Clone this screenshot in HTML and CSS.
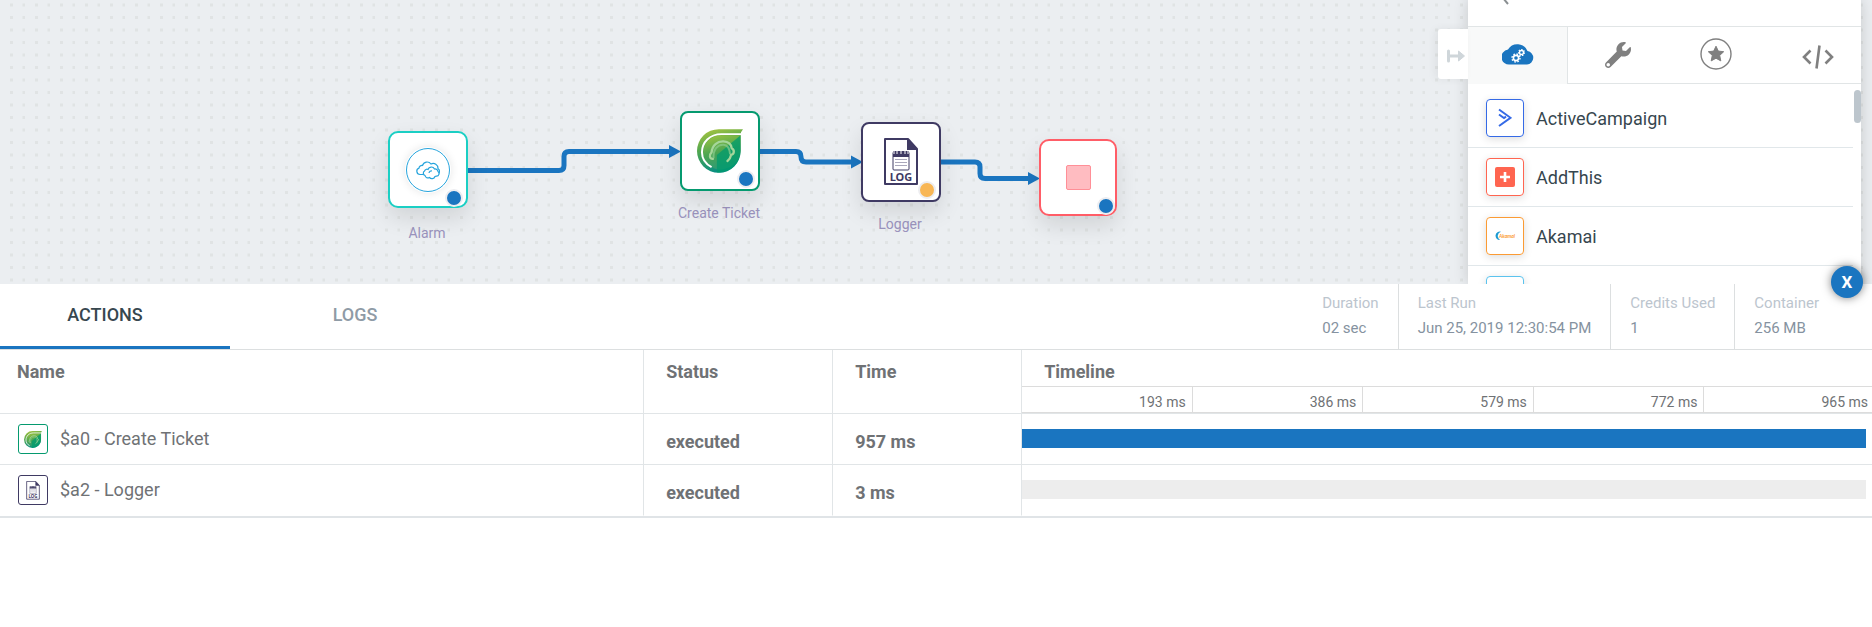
FILE: index.html
```html
<!DOCTYPE html>
<html lang="en">
<head>
<meta charset="utf-8">
<title>Flow execution</title>
<link rel="stylesheet" href="styles.css">
</head>
<body>
<main class="canvas">
  <svg class="wires" aria-hidden="true">
    <defs>
      <pattern id="dots" width="25" height="25" patternUnits="userSpaceOnUse">
        <path d="M10 3.500h3v3h-3zM22.500 3.500h3v3h-3zM10 16h3v3h-3zM22.500 16h3v3h-3z" fill="#e0e3e4"/>
      </pattern>
      <linearGradient id="leafOuter" x1="0" y1="0" x2="0.3" y2="1">
        <stop offset="0" stop-color="#b4c83c"/>
        <stop offset="0.45" stop-color="#55a84e"/>
        <stop offset="1" stop-color="#0a8f80"/>
      </linearGradient>
      <linearGradient id="leafInner" x1="0.2" y1="0" x2="0.5" y2="1">
        <stop offset="0" stop-color="#9cc23e"/>
        <stop offset="0.5" stop-color="#4ba552"/>
        <stop offset="1" stop-color="#2c9a78"/>
      </linearGradient>
      <symbol id="leaf" viewBox="0 0 139 132">
        <path d="M139 0H66A66 66 0 1 0 132 66V20L133 9Z" fill="url(#leafOuter)"/>
        <path d="M131 19H76C42 19 19 42 19 72C19 96 38 114 62 122C98 124 131 100 131 64Z" fill="url(#leafInner)"/>
        <path d="M131 19L60 78V131C100 133 131 104 131 66Z" fill="#009b6c" opacity=".75"/>
        <path d="M133 15H74C38 15 15 40 15 70C15 90 27 106 44 115" fill="none" stroke="#fff" stroke-width="6"/>
        <path d="M48 90C38 90 36 78 44 70C46 48 62 36 80 37C98 38 104 50 105 58C115 64 112 76 103 78C101 88 98 92 92 96" fill="none" stroke="#a5d69b" stroke-width="7" stroke-linecap="round"/>
        <path d="M50 88C48 62 62 46 80 47C96 48 99 64 100 76" fill="none" stroke="#8ccc90" stroke-width="6" opacity=".7"/>
      </symbol>
      <symbol id="log" viewBox="0 0 34 48">
        <path d="M1 1H24L33 11V46H1Z" fill="#fff" stroke="#3f3a63" stroke-width="2" stroke-linejoin="round"/>
        <path d="M23 0L34 12H23Z" fill="#3f3a63"/>
        <rect x="9" y="14" width="16" height="18" rx="1" fill="#fff" stroke="#3f3a63"/>
        <path d="M9 13H25V19H9Z" fill="#3f3a63"/>
        <path d="M10 12V16M13 12V16M17 12V16M21 12V16M24 12V16" stroke="#fff" stroke-width="1"/>
        <path d="M11 21.500H23M11 24.500H23M11 27.500H23" stroke="#aaa8bb"/>
        <text x="17" y="43" text-anchor="middle" class="log-text">LOG</text>
      </symbol>
    </defs>
    <rect width="100%" height="100%" fill="url(#dots)"/>
    <g fill="none" stroke="#1a75c0" stroke-width="5">
      <path d="M468 170.500H559Q564 170.500 564 165.500V156.500Q564 151.500 569 151.500H672"/>
      <path d="M760 151.500H796Q801 151.500 801 156.750Q801 162 806 162H854"/>
      <path d="M941 162H975Q980 162 980 167V173.500Q980 178.500 985 178.500H1031"/>
    </g>
    <path d="M669 145L681 151.500L669 158ZM851 155.500L863 162L851 168.500ZM1028 172L1040 178.500L1028 185Z" fill="#1a75c0"/>
  </svg>

  <div class="node node-alarm">
    <div class="box short teal">
      <svg class="alarm-icon" viewBox="0 0 46 46" aria-hidden="true">
        <circle cx="23" cy="23" r="21.500" fill="#fff" stroke="#27a4dc"/>
        <g fill="#fff" stroke="#27a4dc" stroke-width="1.200">
          <path d="M15 27.500a3.300 3.300 0 0 1-1-6.400a3 3 0 0 1 3.500-2.600a4.800 4.800 0 0 1 8.500-1.500a4.800 4.800 0 0 1 7 4.500a3.300 3.300 0 0 1-1 6Z"/>
          <path d="M20 28.500a2.500 2.500 0 0 1-.5-4.500a2.500 2.500 0 0 1 3.500-1.500a3.500 3.500 0 0 1 6.500-.5a3 3 0 0 1 3.500 2.500a2.600 2.600 0 0 1-1.500 4.700l-1.500.3a3.200 3.200 0 0 1-5.500 1a3 3 0 0 1-4.500-2Z"/>
          <path d="M24 26a2.500 2.500 0 0 1 3-2" fill="none"/>
        </g>
      </svg>
      <span class="dot"></span>
    </div>
    <span class="label">Alarm</span>
  </div>
  <div class="node node-ticket">
    <div class="box green">
      <svg class="leaf-icon" aria-hidden="true"><use href="#leaf"/></svg>
      <span class="dot"></span>
    </div>
    <span class="label">Create Ticket</span>
  </div>
  <div class="node node-logger">
    <div class="box navy">
      <svg class="log-icon" aria-hidden="true"><use href="#log"/></svg>
      <span class="dot orange"></span>
    </div>
    <span class="label">Logger</span>
  </div>
  <div class="node node-end">
    <div class="box short red">
      <span class="stop"></span>
      <span class="dot"></span>
    </div>
  </div>

  <aside class="panel">
    <button class="collapse" type="button" aria-label="Collapse panel">
      <svg width="18" height="14" viewBox="0 0 18 14"><path d="M1.500 2V12M2 7H12" stroke="#cfd6da" stroke-width="3" stroke-linecap="round"/><path d="M11.500 2L17.500 7L11.500 12Z" fill="#cfd6da" stroke="#cfd6da" stroke-linejoin="round"/></svg>
    </button>
    <header class="panel-head">
      <button class="back" type="button" aria-label="Back"><svg width="10" height="14" viewBox="0 0 10 14"><path d="M8 1L2 7L7 13" fill="none" stroke="#8a8f92" stroke-width="2"/></svg></button>
    </header>
    <nav class="panel-tabs">
      <button class="ptab on" type="button" aria-label="Services">
        <svg width="32" height="22" viewBox="0 0 32 22">
          <path d="M8 21.500A7.500 7.500 0 0 1 6 6.500A11 11 0 0 1 25.500 8A6.800 6.800 0 0 1 25 21.500Z" fill="#1a75c0"/>
          <g fill="none" stroke="#fff"><circle cx="14" cy="15" r="2.600" stroke-width="1.600"/><circle cx="14" cy="15" r="4" stroke-width="1.400" stroke-dasharray="1.600 1.540"/><circle cx="19.500" cy="9.500" r="2" stroke-width="1.400"/><circle cx="19.500" cy="9.500" r="3" stroke-width="1.200" stroke-dasharray="1.400 1.290"/></g>
        </svg>
      </button>
      <button class="ptab" type="button" aria-label="Tools">
        <svg width="26" height="26" viewBox="0 0 512 512"><path fill="#808080" d="M507.730 109.100c-2.240-9.030-13.540-12.090-20.120-5.510l-74.360 74.360-67.880-11.310-11.310-67.880 74.360-74.360c6.620-6.620 3.430-17.900-5.660-20.160-47.380-11.740-99.550.910-136.580 37.930-39.640 39.640-50.550 97.100-34.050 147.200L18.740 402.760c-24.990 24.990-24.990 65.510 0 90.500 24.990 24.990 65.510 24.990 90.500 0l213.210-213.210c50.120 16.710 107.470 5.680 147.370-34.220 37.070-37.070 49.700-89.320 37.910-136.730zM64 480c-20 0-34-14-34-32 0-19 14-34 34-34s34 15 34 34c0 18-14 32-34 32z" fill-rule="evenodd"/></svg>
      </button>
      <button class="ptab star" type="button" aria-label="Favourites">
        <svg width="32" height="32" viewBox="0 0 32 32"><circle cx="16" cy="16" r="15" fill="none" stroke="#808080" stroke-width="1.400"/><path d="M16 8.200L18.300 13.100L23.700 13.700L19.700 17.400L20.800 22.900L16 20.200L11.200 22.900L12.300 17.400L8.300 13.700L13.700 13.100Z" fill="#808080" stroke="#808080" stroke-linejoin="round"/></svg>
      </button>
      <button class="ptab" type="button" aria-label="Code">
        <svg width="32" height="24" viewBox="0 0 32 24"><path d="M8.500 5.500L2 12L8.500 18.500M23.500 5.500L30 12L23.500 18.500M17.500 0.500L14.500 23.500" fill="none" stroke="#808080" stroke-width="2.600"/></svg>
      </button>
    </nav>
    <ul class="apps">
      <li><span class="app-icon c-blue"><svg width="14" height="20" viewBox="0 0 14 20"><path d="M1 1.500L12.500 9.800L1 18M1 6.500L6 10L8 8.600" fill="none" stroke="#356ae6" stroke-width="2"/></svg></span>ActiveCampaign</li>
      <li><span class="app-icon c-coral"><svg width="20" height="20" viewBox="0 0 20 20"><rect width="20" height="20" rx="2" fill="#ff6550"/><path d="M10 5V15M5 10H15" stroke="#fff" stroke-width="2.600"/></svg></span>AddThis</li>
      <li><span class="app-icon c-orange"><svg width="22" height="10" viewBox="0 0 22 10"><path d="M7 .8A4.200 4.200 0 1 0 6 9A4.500 4.500 0 0 1 7 .8Z" fill="#1b9ad2"/><text x="5" y="7" class="akamai-text">Akamai</text></svg></span>Akamai</li>
      <li><span class="app-icon c-sky"></span></li>
    </ul>
    <span class="thumb"></span>
  </aside>
</main>

<section class="results">
  <button class="close" type="button" aria-label="Close">X</button>
  <div class="bar">
    <button class="tab active" type="button">ACTIONS</button>
    <button class="tab logs" type="button">LOGS</button>
    <dl class="stats">
      <div><dt>Duration</dt><dd>02 sec</dd></div>
      <div><dt>Last Run</dt><dd>Jun 25, 2019 12:30:54 PM</dd></div>
      <div><dt>Credits Used</dt><dd>1</dd></div>
      <div class="last"><dt>Container</dt><dd>256 MB</dd></div>
    </dl>
  </div>
  <table class="grid">
    <colgroup><col><col class="c-status"><col class="c-time"><col class="c-line"></colgroup>
    <thead>
      <tr>
        <th scope="col">Name</th><th scope="col">Status</th><th scope="col">Time</th>
        <th scope="col" class="timeline">
          <div class="tl-title">Timeline</div>
          <div class="ticks"><span>193 ms</span><span>386 ms</span><span>579 ms</span><span>772 ms</span><span>965 ms</span></div>
        </th>
      </tr>
    </thead>
    <tbody>
      <tr>
        <td class="name"><div class="name-in"><span class="row-icon r-green"><svg class="leaf-small" aria-hidden="true"><use href="#leaf"/></svg></span><span class="row-name">$a0 - Create Ticket</span></div></td>
        <td class="strong">executed</td><td class="strong">957 ms</td>
        <td class="track"><div class="meter full"></div></td>
      </tr>
      <tr>
        <td class="name"><div class="name-in"><span class="row-icon r-navy"><svg class="log-small" aria-hidden="true"><use href="#log"/></svg></span><span class="row-name">$a2 - Logger</span></div></td>
        <td class="strong">executed</td><td class="strong">3 ms</td>
        <td class="track"><div class="meter"></div></td>
      </tr>
    </tbody>
  </table>
</section>
</body>
</html>
```
FILE: styles.css
```css
* { box-sizing: border-box; }
body {
  margin: 0;
  min-height: 100vh;
  display: flex;
  flex-direction: column;
  background: #fff;
  font-family: Roboto, "Liberation Sans", sans-serif;
  color: #6f7275;
}
button { border: 0; padding: 0; background: none; font: inherit; color: inherit; cursor: pointer; }

/* Flow canvas */
.canvas { position: relative; height: 284px; overflow: hidden; background: #ebeef1; }
.wires { position: absolute; inset: 0; width: 100%; height: 100%; }
.node { position: absolute; width: 80px; display: flex; flex-direction: column; align-items: center; gap: 12px; }
.node-alarm { left: 388px; top: 131px; }
.node-ticket { left: 680px; top: 111px; }
.node-logger { left: 861px; top: 122px; }
.node-end { left: 1039px; top: 139px; width: 78px; }
.box {
  position: relative;
  width: 100%;
  height: 80px;
  display: flex;
  align-items: center;
  justify-content: center;
  background: #fff;
  border: 2px solid;
  border-radius: 8px;
  box-shadow: 0 10px 22px rgba(0, 0, 0, .11);
}
.short { height: 77px; margin-bottom: 3px; border-radius: 10px; }
.teal { border-color: #1bcfc4; }
.green { border-color: #059a6f; }
.navy { border-color: #3f3a63; }
.red { border-color: #ff5d67; }
.dot {
  position: absolute;
  right: 3px;
  bottom: 1px;
  width: 18px;
  height: 18px;
  border: 2px solid #ededf0;
  border-radius: 50%;
  background: #1a75c0;
}
.short .dot { bottom: -1px; }
.red .dot { right: 0; }
.dot.orange { background: #f8b654; }
.label { padding-right: 2px; font-size: 14px; line-height: 20px; color: #9a93bd; white-space: nowrap; }
.alarm-icon { width: 46px; height: 46px; border-radius: 50%; box-shadow: 0 0 8px rgba(0, 0, 0, .1); }
.leaf-icon { width: 46px; height: 44px; }
.log-icon { width: 34px; height: 48px; }
.log-text { font: 700 11px "Noto Sans", sans-serif; fill: #3f3a63; }
.stop { width: 25px; height: 25px; background: #ffbcc1; border: 1px solid #ff8f97; border-radius: 2px; }

/* Service panel */
.panel {
  position: absolute;
  right: 11px;
  top: 0;
  bottom: 0;
  width: 393px;
  background: #fff;
  box-shadow: 0 0 14px rgba(0, 0, 0, .16);
}
.collapse {
  position: absolute;
  right: 100%;
  top: 29px;
  width: 30px;
  height: 50px;
  display: flex;
  align-items: center;
  justify-content: flex-end;
  padding: 3px 3px 0 0;
  background: #fff;
  border-radius: 3px 0 0 3px;
  box-shadow: -3px 0 8px rgba(0, 0, 0, .06);
}
.panel-head { height: 27px; padding-left: 33px; border-bottom: 1px solid #e1e5e6; overflow: hidden; }
.back { display: block; margin-top: -10px; height: 14px; }
.panel-tabs { display: flex; height: 57px; }
.ptab { flex: 0 0 100px; display: flex; align-items: center; justify-content: center; border-bottom: 1px solid #e1e5e6; }
.ptab.on { padding-bottom: 4px; background: #f8f9f9; border-bottom: 0; border-right: 1px solid #e1e5e6; }
.ptab.star { padding: 0 4px 2px 0; }
.ptab:last-child { flex: 1; padding: 3px 0 0 7px; }
.apps { list-style: none; margin: 0; padding: 5px 8px 0 0; }
.apps li {
  display: flex;
  align-items: center;
  gap: 12px;
  height: 59px;
  padding-left: 18px;
  border-bottom: 1px solid #e1e7ea;
  font-size: 18px;
  color: #37474f;
}
.app-icon {
  width: 38px;
  height: 38px;
  display: flex;
  align-items: center;
  justify-content: center;
  border: 1px solid;
  border-radius: 4px;
  box-shadow: 0 2px 8px rgba(0, 0, 0, .14);
}
.c-blue { border-color: #356ae6; }
.c-coral { border-color: #ff6550; }
.c-orange { border-color: #fb9b34; }
.c-sky { border-color: #5cc3ee; }
.akamai-text { font: italic 700 5px Lato, sans-serif; fill: #fb9b34; }
.thumb { position: absolute; right: 0; top: 90px; width: 7px; height: 33px; border-radius: 4px; background: #bdc6cd; }

/* Results */
.results { position: relative; flex: 1; background: #fff; }
.close {
  position: absolute;
  right: 9px;
  top: -18px;
  width: 32px;
  height: 32px;
  border-radius: 50%;
  background: #1a75c0;
  color: #fff;
  font-size: 17px;
  font-weight: 700;
  box-shadow: 0 0 10px rgba(0, 0, 0, .5);
}
.bar { display: flex; height: 66px; border-bottom: 1px solid #dcdfe0; }
.tab { width: 250px; padding-bottom: 5px; font-size: 18px; font-weight: 500; color: #8f9ba6; }
.tab.active { width: 230px; padding: 0 20px 2px 0; color: #37474f; border-bottom: 3px solid #1a75c0; }
.stats { display: flex; margin: 0 0 0 auto; font-size: 15px; line-height: 25px; }
.stats div { padding: 7px 19px 0; border-right: 1px solid #dcdfe0; }
.stats .last { padding-right: 53px; border-right: 0; }
.stats dt { color: #bcc5ce; }
.stats dd { margin: 0; color: #8592a0; }

.grid { width: 100%; table-layout: fixed; border-collapse: separate; border-spacing: 0; border-bottom: 2px solid #e0e4e7; font-size: 18px; }
.c-status, .c-time { width: 189px; }
.c-line { width: 45.400%; }
th { height: 64px; padding: 10px 22px 0; text-align: left; vertical-align: top; font-weight: 700; line-height: 24px; border-bottom: 1px solid #e1e5e7; border-right: 1px solid #e1e5e7; }
th:first-child { padding-left: 17px; }
th.timeline { padding: 0; border-right: 0; }
.tl-title { height: 37px; padding: 10px 22px 0; border-bottom: 1px solid #dcdcdc; }
.ticks { display: flex; height: 26px; border-bottom: 1px solid #dcdcdc; font-size: 14px; font-weight: 400; line-height: 30px; }
.ticks span { flex: 1; height: 25px; padding-right: 6px; text-align: right; border-right: 1px solid #dcdcdc; }
.ticks span:last-child { padding-right: 4px; border-right: 0; }
td { height: 51px; padding: 0 22px; border-right: 1px solid #e1e5e7; border-bottom: 1px solid #e1e5e7; }
tbody tr:last-child td { border-bottom-color: #fff; }
td.name { padding: 0 18px; }
.name-in { display: flex; align-items: center; gap: 12px; }
.row-name { padding-bottom: 2px; }
td.strong { padding-top: 4px; font-weight: 700; }
td.track { padding: 0 6px 2px 0; border-right: 0; }
.row-icon { width: 30px; height: 30px; display: flex; align-items: center; justify-content: center; border: 1px solid; border-radius: 3px; }
.r-green { border-color: #059a6f; }
.r-navy { border-color: #3f3a63; }
.leaf-small { width: 18px; height: 17px; }
.log-small { width: 14px; height: 19px; }
.meter { height: 19px; background: #ededed; }
.meter.full { background: #1a75c0; }
```
